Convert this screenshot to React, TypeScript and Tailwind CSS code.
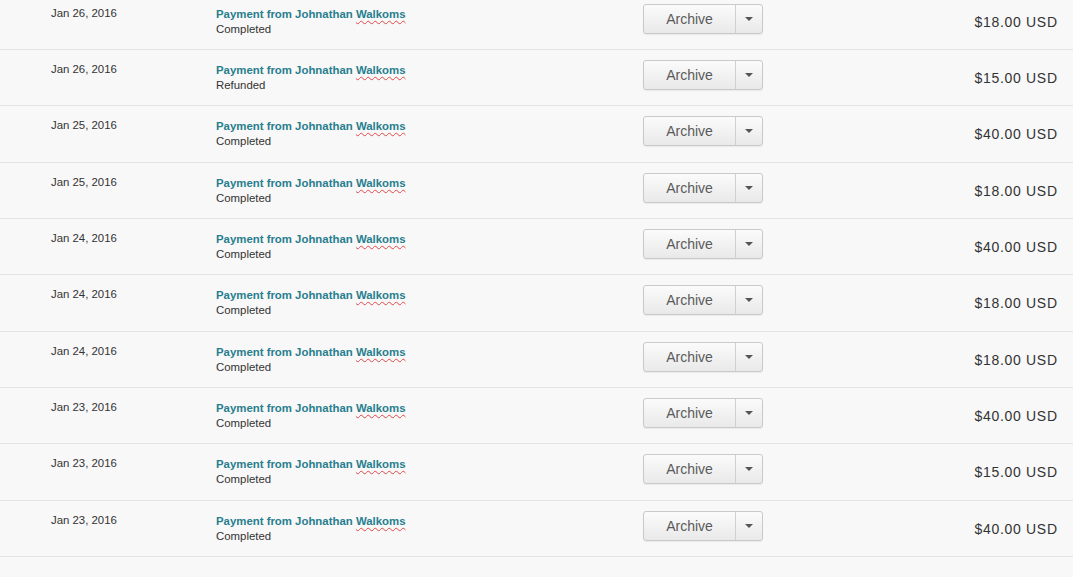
const rows = [
  { date: "Jan 26, 2016", status: "Completed", amount: "$18.00 USD" },
  { date: "Jan 26, 2016", status: "Refunded", amount: "$15.00 USD" },
  { date: "Jan 25, 2016", status: "Completed", amount: "$40.00 USD" },
  { date: "Jan 25, 2016", status: "Completed", amount: "$18.00 USD" },
  { date: "Jan 24, 2016", status: "Completed", amount: "$40.00 USD" },
  { date: "Jan 24, 2016", status: "Completed", amount: "$18.00 USD" },
  { date: "Jan 24, 2016", status: "Completed", amount: "$18.00 USD" },
  { date: "Jan 23, 2016", status: "Completed", amount: "$40.00 USD" },
  { date: "Jan 23, 2016", status: "Completed", amount: "$15.00 USD" },
  { date: "Jan 23, 2016", status: "Completed", amount: "$40.00 USD" },
];

function ArchiveButton() {
  return (
    <div className="flex h-[30px] w-[120px] rounded-[3px] border border-[#c9c9c9] bg-gradient-to-b from-[#fbfbfb] to-[#e9e9e9] shadow-[0_1px_1px_rgba(0,0,0,0.06)]">
      <button className="flex-1 border-r border-[#d0d0d0] text-[14px] text-[#5a5a5a] leading-none">
        Archive
      </button>
      <span className="flex w-[26px] items-center justify-center">
        <span className="block h-0 w-0 border-x-[4px] border-t-[4px] border-x-transparent border-t-[#555]" />
      </span>
    </div>
  );
}

export default function App() {
  return (
    <div
      className="h-[577px] w-full overflow-hidden bg-[#f8f8f8] text-[#333]"
      style={{ fontFamily: '"Liberation Sans", Arial, sans-serif' }}
    >
      <div className="-mt-[6.33px]">
        {rows.map((r, i) => (
          <div
            key={i}
            className="flex h-[56.33px] items-start border-b border-[#e4e4e4]"
          >
            <div className="w-[216px] shrink-0 pl-[51px] pt-[12px] text-[11.4px] leading-[14px]">
              {r.date}
            </div>
            <div className="w-[427px] shrink-0 pt-[13px] text-[11.4px] leading-[14px]">
              <a className="font-bold text-[#277e8e]">
                Payment from Johnathan{" "}
                <span className="underline decoration-wavy decoration-[#e04848] decoration-1 underline-offset-2">
                  Walkoms
                </span>
              </a>
              <div className="mt-[1px]">{r.status}</div>
            </div>
            <div className="pt-[10px]">
              <ArchiveButton />
            </div>
            <div className="flex-1 pr-[15.3px] pt-[18px] text-right text-[14px] leading-[20px] tracking-[0.7px]">
              {r.amount}
            </div>
          </div>
        ))}
      </div>
    </div>
  );
}
